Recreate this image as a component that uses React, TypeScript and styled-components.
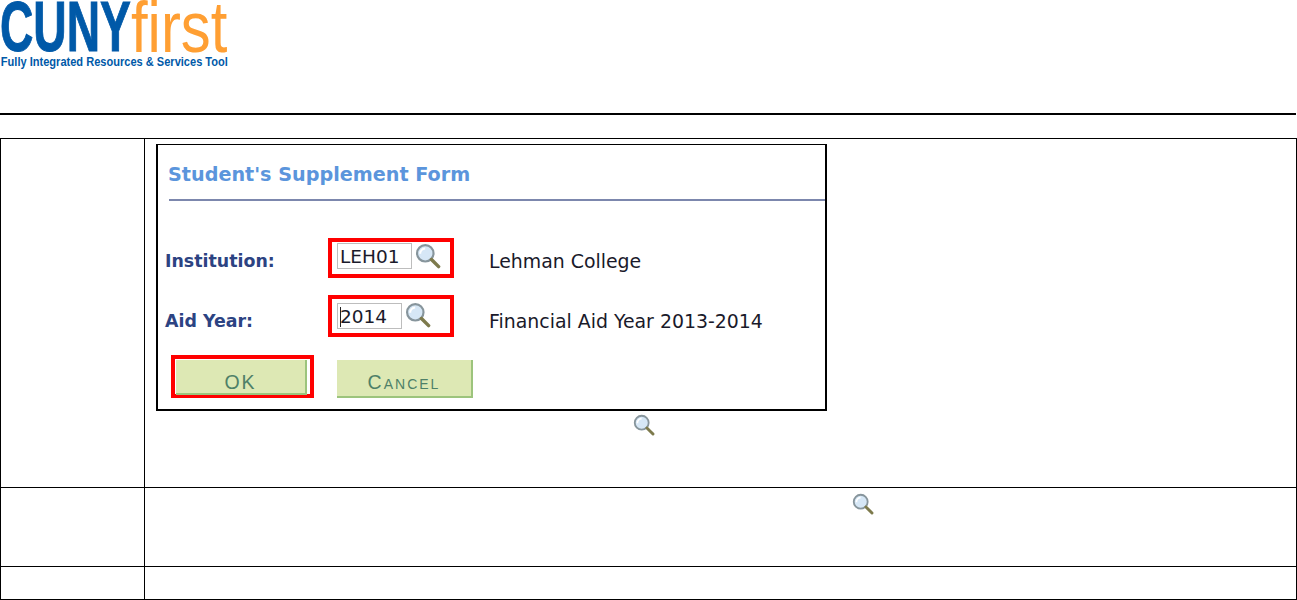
import React from "react";
import styled, { createGlobalStyle } from "styled-components";

const GlobalStyle = createGlobalStyle`
  html, body {
    margin: 0;
    padding: 0;
    background: #fff;
    overflow: hidden;
  }
`;

const Magnifier: React.FC<{ size: number }> = ({ size }) => (
  <svg width={size} height={size} viewBox="0 0 24 24">
    <circle cx="9.5" cy="9.5" r="7.6" fill="#d6e7f6" stroke="#87959c" strokeWidth="2" />
    <path d="M4.8 10a5 5 0 0 1 4.6-5" fill="none" stroke="#fff" strokeWidth="1.8" />
    <path d="M15.2 15.2l6.6 6.6" stroke="#7d7a4c" strokeWidth="3.2" strokeLinecap="round" />
  </svg>
);

const App: React.FC = () => (
  <Page>
    <GlobalStyle />
    <Header>
      <Logo>
        <LogoTop>
          <Cuny>CUNY</Cuny>
          <First>first</First>
        </LogoTop>
        <Tagline>Fully Integrated Resources &amp; Services Tool</Tagline>
      </Logo>
    </Header>
    <Table>
      <LabelCell $height={349} />
      <BodyCell $height={349}>
        <Shot>
          <ShotTitle>Student's Supplement Form</ShotTitle>
          <ShotRule />
          <FormRow $marginTop={37} $height={40}>
            <FieldLabel $offset={11}>Institution:</FieldLabel>
            <Highlight $padTop={1}>
              <FakeInput $width={75}>LEH01</FakeInput>
              <Magnifier size={26} />
            </Highlight>
            <FieldValue $offset={11}>Lehman College</FieldValue>
          </FormRow>
          <FormRow $marginTop={17} $height={42}>
            <FieldLabel $offset={14}>Aid Year:</FieldLabel>
            <Highlight $padTop={3}>
              <FakeInput $width={65} $shift={1}>
                <Caret />
                2014
              </FakeInput>
              <Magnifier size={26} />
            </Highlight>
            <FieldValue $offset={14}>Financial Aid Year 2013-2014</FieldValue>
          </FormRow>
          <Buttons>
            <OkHighlight>
              <FormButton $width={131} $height={35}>OK</FormButton>
            </OkHighlight>
            <CancelWrap>
              <FormButton $width={136} $height={38}>Cancel</FormButton>
            </CancelWrap>
          </Buttons>
        </Shot>
        <NoteIcon $left={477} $top={3}>
          <Magnifier size={22} />
        </NoteIcon>
      </BodyCell>
      <LabelCell $height={79} />
      <BodyCell $height={79}>
        <NoteIcon $left={696} $top={5}>
          <Magnifier size={22} />
        </NoteIcon>
      </BodyCell>
      <LabelCell $height={33} />
      <BodyCell $height={33} />
    </Table>
  </Page>
);

const Page = styled.div`
  width: 1297px;
  height: 600px;
  overflow: hidden;
  font-family: "DejaVu Sans", Verdana, sans-serif;
`;

const Header = styled.header`
  height: 113px;
  margin: 0 1px 23px 0;
  border-bottom: 2px solid #000;
`;

const Logo = styled.div`
  width: 230px;
  height: 70px;
`;

const LogoTop = styled.div`
  display: flex;
  align-items: flex-start;
  height: 55px;
  white-space: nowrap;
`;

const Cuny = styled.span`
  display: block;
  width: 198px;
  margin-right: -67px;
  font: 700 70px/55px "Liberation Sans", Arial, sans-serif;
  color: #0059a8;
  -webkit-text-stroke: 1px #0059a8;
  transform: scaleX(0.66);
  transform-origin: left center;
`;

const First = styled.span`
  display: block;
  width: 116px;
  margin-right: -20px;
  font: 400 72px/55px "Liberation Sans", Arial, sans-serif;
  color: #ff9f33;
  transform: scaleX(0.83);
  transform-origin: left center;
`;

const Tagline = styled.div`
  width: 267px;
  padding-left: 1px;
  font: 700 13px/14px "Liberation Sans", Arial, sans-serif;
  color: #0059a8;
  white-space: nowrap;
  transform: scaleX(0.85);
  transform-origin: left center;
`;

const Table = styled.div`
  display: grid;
  grid-template-columns: 144px 1152px;
  width: 1297px;
  border-top: 1px solid #000;
  border-left: 1px solid #000;
  box-sizing: border-box;
`;

const LabelCell = styled.div<{ $height: number }>`
  height: ${(p) => p.$height}px;
  border-right: 1px solid #000;
  border-bottom: 1px solid #000;
  box-sizing: border-box;
`;

const BodyCell = styled(LabelCell)`
  padding-left: 11px;
`;

const Shot = styled.div`
  width: 671px;
  height: 267px;
  margin-top: 5px;
  border: 2px solid #000;
  border-top-width: 1px;
  box-sizing: border-box;
  padding-top: 18px;
  background: #fff;
`;

const ShotTitle = styled.div`
  margin-left: 10px;
  font: 700 19.2px/24px "DejaVu Sans", Verdana, sans-serif;
  color: #5b95dc;
`;

const ShotRule = styled.div`
  height: 2px;
  margin: 12px 0 0 11px;
  background: #7c87ad;
`;

const FormRow = styled.div<{ $marginTop: number; $height: number }>`
  display: flex;
  align-items: flex-start;
  height: ${(p) => p.$height}px;
  margin-top: ${(p) => p.$marginTop}px;
`;

const FieldLabel = styled.div<{ $offset: number }>`
  width: 163px;
  margin: ${(p) => p.$offset}px 0 0 7px;
  font: 700 17.4px/24px "DejaVu Sans", Verdana, sans-serif;
  color: #2c4382;
`;

const Highlight = styled.div<{ $padTop: number }>`
  display: flex;
  align-items: flex-start;
  gap: 3px;
  width: 126px;
  height: 100%;
  border: 4px solid #f00;
  box-sizing: border-box;
  padding: ${(p) => p.$padTop}px 0 0 5px;
`;

const FakeInput = styled.div<{ $width: number; $shift?: number }>`
  position: relative;
  width: ${(p) => p.$width}px;
  height: 26px;
  margin-top: ${(p) => p.$shift ?? 0}px;
  border: 1px solid #bdbdbd;
  box-sizing: border-box;
  padding-left: 2px;
  font: 400 18.5px/25px "DejaVu Sans", Verdana, sans-serif;
  color: #1a1a2a;
`;

const Caret = styled.span`
  position: absolute;
  left: 2px;
  top: 3px;
  width: 1px;
  height: 20px;
  background: #222;
`;

const FieldValue = styled.div<{ $offset: number }>`
  margin: ${(p) => p.$offset}px 0 0 35px;
  font: 400 18.9px/24px "DejaVu Sans", Verdana, sans-serif;
  color: #1a1a2a;
`;

const Buttons = styled.div`
  display: flex;
  align-items: flex-start;
  margin: 18px 0 0 13px;
  gap: 23px;
`;

const OkHighlight = styled.div`
  width: 143px;
  height: 43px;
  border: 4px solid #f00;
  box-sizing: border-box;
  padding: 1px 0 0 1px;
`;

const CancelWrap = styled.div`
  padding-top: 5px;
`;

const FormButton = styled.div<{ $width: number; $height: number }>`
  width: ${(p) => p.$width}px;
  height: ${(p) => p.$height}px;
  box-sizing: border-box;
  background: #dde8b4;
  border-right: 2px solid #9cc47c;
  border-bottom: 2px solid #9cc47c;
  text-align: center;
  font: 400 19.5px/44px "Liberation Sans", Arial, sans-serif;
  font-variant: small-caps;
  letter-spacing: 2px;
  color: #4e8068;
`;

const NoteIcon = styled.div<{ $left: number; $top: number }>`
  margin: ${(p) => p.$top}px 0 0 ${(p) => p.$left}px;
  width: 22px;
  height: 22px;
`;

export default App;
